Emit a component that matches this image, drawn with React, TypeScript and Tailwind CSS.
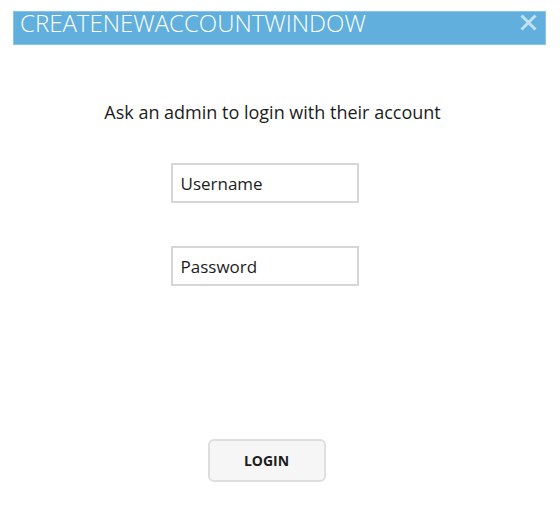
export default function App() {
  return (
    <main className="min-h-screen bg-white pt-[11px] pr-3.5 pl-[13px] font-['Open_Sans','Noto_Sans',sans-serif] text-[#1c1c1c]">
      <header className="flex h-[34px] items-start justify-between border border-[#8cc5e4] bg-[#60afdc] pr-2 pl-1.5 text-white">
        <h1 className="text-2xl leading-[22px] font-light">CREATENEWACCOUNTWINDOW</h1>
        <button type="button" aria-label="Close" className="mt-0.5 text-[#c2e1f2]">
          <svg width="17" height="17" viewBox="0 0 17 17" fill="none" stroke="currentColor" strokeWidth="3">
            <path d="M1.5 1.5 15.5 15.5M15.5 1.5 1.5 15.5" />
          </svg>
        </button>
      </header>
      <form className="flex flex-col items-center pt-[55px] pr-[30px]" onSubmit={(event) => event.preventDefault()}>
        <p className="ml-4 text-lg leading-6">Ask an admin to login with their account</p>
        <input
          type="text"
          aria-label="Username"
          defaultValue="Username"
          className="mt-[39px] h-10 w-[188px] border-2 border-[#d6d6d6] px-2 text-[17px] outline-none"
        />
        <input
          type="text"
          aria-label="Password"
          defaultValue="Password"
          className="mt-[43px] h-10 w-[188px] border-2 border-[#d6d6d6] px-2 text-[17px] outline-none"
        />
        <button
          type="submit"
          className="mt-[153px] ml-1 h-[43px] w-[118px] rounded-md border-2 border-[#dedede] bg-[#f6f6f6] text-sm font-bold"
        >
          LOGIN
        </button>
      </form>
    </main>
  );
}
